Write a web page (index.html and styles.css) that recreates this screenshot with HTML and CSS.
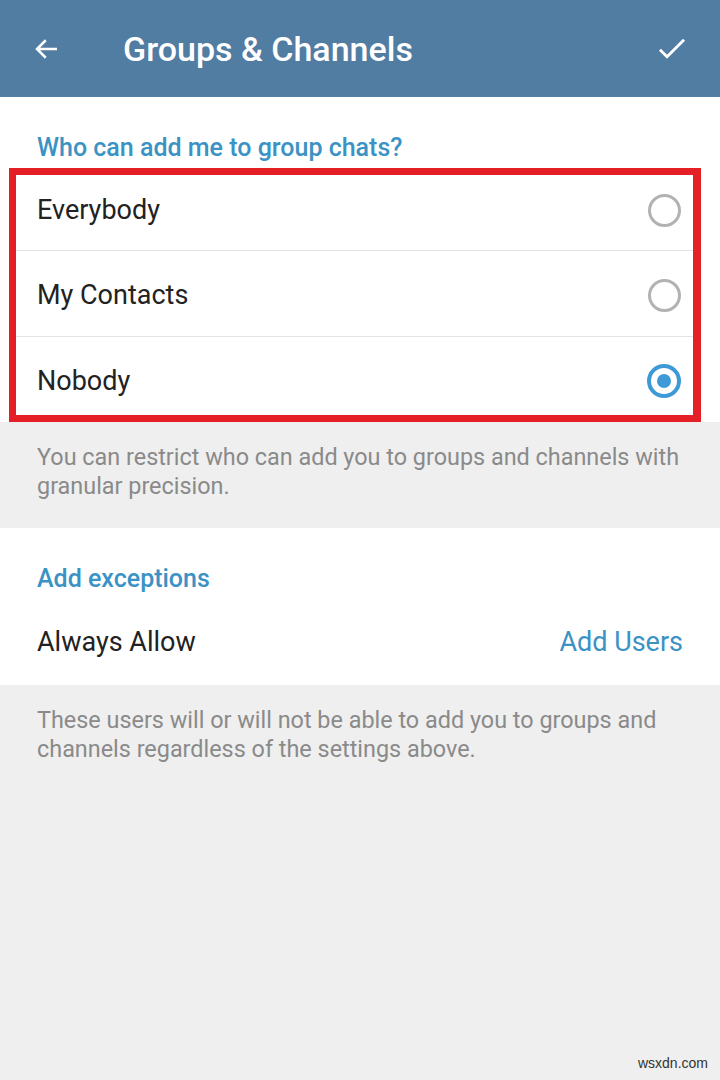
FILE: index.html
```html
<!DOCTYPE html>
<html lang="en">
<head>
    <meta charset="UTF-8">
    <meta name="viewport" content="width=device-width, initial-scale=1.0">
    <title>Groups &amp; Channels</title>
    <link rel="stylesheet" href="styles.css">
</head>
<body>
    <div class="toolbar">
        <span class="toolbar-icon back">
            <svg width="30" height="30" viewBox="0 0 24 24"><path d="M20 12H4.5M11 5l-7 7 7 7" fill="none" stroke="#fff" stroke-width="2"/></svg>
        </span>
        <h1 class="title">Groups &amp; Channels</h1>
        <span class="toolbar-icon done">
            <svg width="34" height="34" viewBox="0 0 24 24"><path d="M3.5 12.5l5 5L20.5 5.5" fill="none" stroke="#fff" stroke-width="2"/></svg>
        </span>
    </div>

    <div class="section">
        <div class="section-title">Who can add me to group chats?</div>
        <div class="highlight">
            <div class="option">
                <span class="option-label">Everybody</span>
                <span class="radio"></span>
            </div>
            <div class="option">
                <span class="option-label">My Contacts</span>
                <span class="radio"></span>
            </div>
            <div class="option">
                <span class="option-label">Nobody</span>
                <span class="radio checked"></span>
            </div>
        </div>
    </div>

    <div class="hint first-hint">
        You can restrict who can add you to groups and channels with granular precision.
    </div>

    <div class="section exceptions">
        <div class="section-title">Add exceptions</div>
        <div class="option plain">
            <span class="option-label">Always Allow</span>
            <span class="option-value">Add Users</span>
        </div>
    </div>

    <div class="hint">
        These users will or will not be able to add you to groups and channels regardless of the settings above.
    </div>

    <div class="watermark">wsxdn.com</div>
</body>
</html>
```

FILE: styles.css
```css
body {
    margin: 0;
    width: 720px;
    min-height: 1080px;
    background-color: #efefef;
    font-family: Roboto, "Noto Sans", sans-serif;
    position: relative;
}
.toolbar {
    height: 97px;
    background-color: #527da3;
    display: flex;
    align-items: center;
    color: #fff;
    box-shadow: 0 1px 0 #dde8f2;
}
.toolbar-icon {
    display: flex;
    align-items: center;
    justify-content: center;
}
.back {
    width: 30px;
    margin-left: 32px;
}
.done {
    margin-left: auto;
    margin-right: 31px;
}
.title {
    margin: 0 0 0 61px;
    font-size: 34px;
    font-weight: 500;
}
.section {
    background-color: #fff;
    padding-top: 30px;
}
.section-title {
    color: #3b92c4;
    font-size: 25px;
    font-weight: 500;
    padding-left: 37px;
    height: 41px;
    line-height: 41px;
}
.highlight {
    margin: 0 19px 0 9px;
    border: 7px solid #e41f26;
    border-right-width: 8px;
    height: 240px;
}
.option {
    height: 86px;
    display: flex;
    align-items: center;
    padding-left: 21px;
    padding-right: 12px;
    border-bottom: 1px solid #e3e3e3;
    box-sizing: border-box;
    color: #222;
    font-size: 27px;
}
.highlight .option:first-child {
    height: 76px;
    padding-bottom: 5px;
}
.highlight .option:last-child {
    border-bottom: none;
    height: 78px;
    padding-top: 10px;
}
.highlight .option:nth-child(2) {
    padding-top: 3px;
}
.option-label {
    flex: 1;
}
.radio {
    width: 27px;
    height: 27px;
    border: 3px solid #b2b2b2;
    border-radius: 50%;
    position: relative;
}
.radio.checked {
    border-color: #3d9ad6;
    border-width: 4px;
    width: 26px;
    height: 26px;
}
.radio.checked::after {
    content: "";
    position: absolute;
    left: 6px;
    top: 6px;
    width: 14px;
    height: 14px;
    border-radius: 50%;
    background-color: #3d9ad6;
}
.hint {
    color: #8a8a8a;
    font-size: 23.4px;
    line-height: 29px;
    padding: 21px 37px 0 37px;
}
.first-hint {
    height: 85px;
}
.exceptions {
    padding-top: 30px;
}
.plain {
    padding-left: 37px;
    padding-right: 37px;
    height: 86px;
    border-bottom: none;
}
.option-value {
    color: #3b92c4;
}
.watermark {
    position: absolute;
    right: 12px;
    bottom: 9px;
    font-family: "Liberation Sans", Arial, sans-serif;
    font-size: 14px;
    color: #333;
}
```
